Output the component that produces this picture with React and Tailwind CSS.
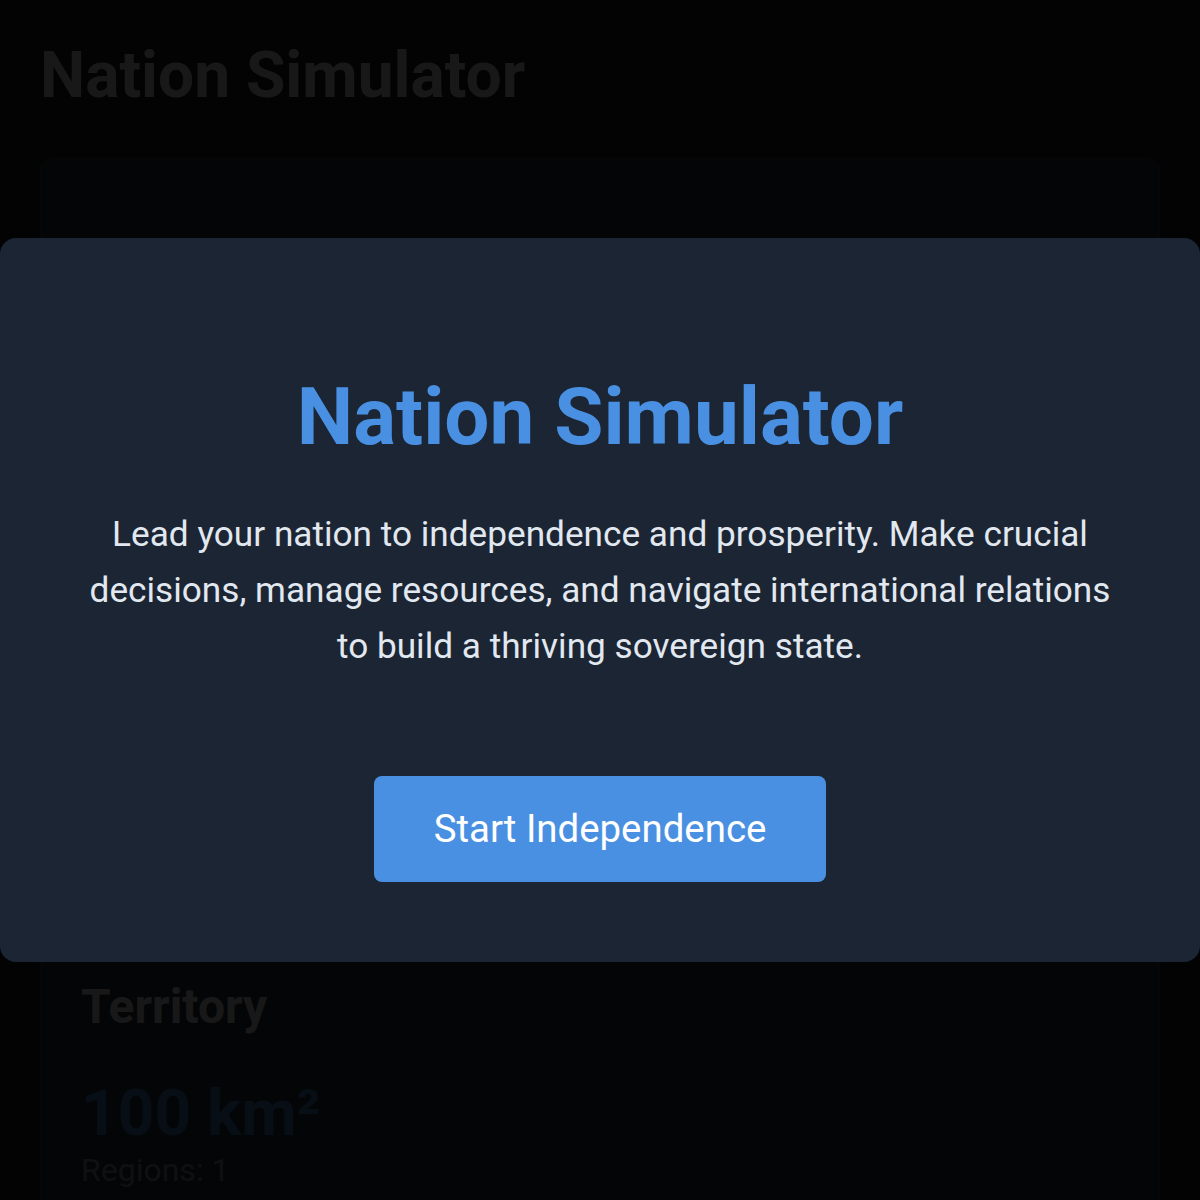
import { useState } from "react";

// Stat block inside the dashboard card (behind the intro modal).
function StatBlock({ title, value, sub }) {
  return (
    <div className="flex flex-col">
      <h2 className="text-[48px] font-bold leading-[1.2] text-[#f0f0f0]">{title}</h2>
      <div className="mt-[47px] text-[64px] font-bold leading-none text-[#4a90e2]">{value}</div>
      <div className="text-[32px] leading-[1.5] text-[#a0a0a0]">{sub}</div>
    </div>
  );
}

export default function App() {
  const [started, setStarted] = useState(false);

  return (
    <div className="min-h-screen bg-[#1e1e1e] px-10 pt-[38px] pb-10 font-['Roboto',sans-serif] text-[#f0f0f0]">
      <h1 className="text-[64px] font-bold leading-[1.2]">Nation Simulator</h1>
      <div className="mt-[43px] flex flex-col gap-[23px] rounded-xl border border-[#3a4556] bg-[#2a3344] px-10 pt-[100px] pb-10">
        <StatBlock title="Population" value="10,000" sub="Growth: 1.2%" />
        <StatBlock title="Treasury" value="$50,000" sub="Income: $1,200" />
        <StatBlock title="Stability" value="75%" sub="Approval: 60%" />
        <StatBlock title="Territory" value={<>100 km²</>} sub="Regions: 1" />
      </div>

      {!started && (
        <div className="fixed inset-0 z-10 flex items-center justify-center bg-black/90">
          <div className="w-full rounded-2xl bg-[#1b2533] px-10 pt-[131px] pb-[80px] text-center">
            <h2 className="text-[80px] font-bold leading-[1.2] text-[#4a90e2]">Nation Simulator</h2>
            <p className="mx-auto mt-[41px] max-w-[1060px] text-[35.2px] leading-[56px] text-[#e2e8f0]">
              Lead your nation to independence and prosperity. Make crucial decisions, manage
              resources, and navigate international relations to build a thriving sovereign state.
            </p>
            <button
              type="button"
              onClick={() => setStarted(true)}
              className="mt-[102px] inline-flex h-[106px] w-[452px] items-center justify-center rounded-lg bg-[#4a90e2] text-[38.4px] text-white"
            >
              Start Independence
            </button>
          </div>
        </div>
      )}
    </div>
  );
}
